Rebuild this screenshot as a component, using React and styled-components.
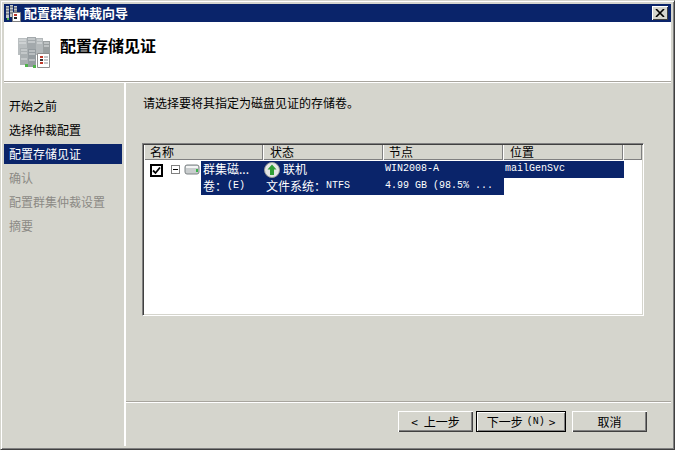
import React from "react"
import styled, { createGlobalStyle } from "styled-components"

const cjk = `"Noto Sans CJK SC", "Liberation Sans", sans-serif`
const navy = "#0a246a"
const face = "#d5d5cd"

const GlobalStyle = createGlobalStyle`
  html, body {
    margin: 0;
    padding: 0;
    background: ${face};
  }
  body {
    font-family: ${cjk};
    font-size: 12px;
    color: #000;
  }
`

const Window = styled.div`
  box-sizing: border-box;
  width: 675px;
  height: 450px;
  padding: 3px;
  background: ${face};
  border-style: solid;
  border-width: 1px;
  border-color: ${face} #404040 #404040 ${face};
  box-shadow: inset 1px 1px 0 #fff, inset -1px -1px 0 #808080;
  display: flex;
  flex-direction: column;
  overflow: hidden;
`

const TitleBar = styled.div`
  flex: 0 0 18px;
  background: ${navy};
  display: flex;
  align-items: center;
  padding: 0 3px 0 1px;
  gap: 2px;
`

const TitleText = styled.span`
  flex: 1;
  color: #fff;
  font-size: 13px;
  font-weight: 700;
  line-height: 18px;
`

const CloseButton = styled.div`
  box-sizing: border-box;
  width: 16px;
  height: 14px;
  background: ${face};
  box-shadow: inset 1px 1px 0 #fff, inset -1px -1px 0 #404040;
  display: flex;
  align-items: center;
  justify-content: center;
`

const Header = styled.div`
  flex: 0 0 59px;
  background: #fff;
  display: flex;
  align-items: flex-start;
  padding: 13px 0 0 13px;
  gap: 9px;
  box-sizing: border-box;
`

const HeaderTitle = styled.h1`
  margin: 0;
  font-size: 16px;
  line-height: 20px;
  font-weight: 700;
`

const Rule = styled.div`
  flex: 0 0 2px;
  background: linear-gradient(#a8a59e 0 1px, #fff 1px 2px);
`

const Body = styled.div`
  flex: 1;
  display: flex;
  min-height: 0;
`

const Sidebar = styled.nav`
  flex: 0 0 122px;
  box-sizing: border-box;
  padding: 13px 2px 0 0;
  border-right: 2px solid #fff;
  display: flex;
  flex-direction: column;
  gap: 4px;
`

const NavItem = styled.div`
  height: 20px;
  line-height: 20px;
  padding-left: 5px;
  white-space: nowrap;
  background: ${props => (props.$active ? navy : "transparent")};
  color: ${props => (props.$active ? "#fff" : props.$disabled ? "#8c8a85" : "#000")};
`

const Main = styled.div`
  flex: 1;
  display: flex;
  flex-direction: column;
  min-width: 0;
`

const Content = styled.div`
  flex: 1;
  padding: 12px 27px 0 16px;
  min-height: 0;
`

const Instruction = styled.p`
  margin: 0 0 32px 1px;
  line-height: 16px;
`

const ListBox = styled.div`
  box-sizing: border-box;
  width: 502px;
  height: 173px;
  background: #fff;
  border-style: solid;
  border-width: 1px;
  border-color: #808080 #fff #fff #808080;
  box-shadow: inset 1px 1px 0 #404040, inset -1px -1px 0 ${face};
  padding: 1px;
`

const ColumnHeads = styled.div`
  display: grid;
  grid-template-columns: 119px 120px 120px 120px 1fr;
  height: 15px;
  background: ${face};
  box-shadow: inset 0 -1px 0 #808080;
`

const ColumnHead = styled.div`
  box-sizing: border-box;
  padding-left: ${props => props.$indent}px;
  line-height: 14px;
  border-right: 1px solid #808080;
  box-shadow: 1px 0 0 #fff inset;
`

const Row = styled.div`
  display: flex;
  padding-top: 1px;
`

const RowLead = styled.div`
  flex: 0 0 57px;
  box-sizing: border-box;
  padding: 3px 0 0 6px;
  display: flex;
  align-items: flex-start;
`

const Check = styled.div`
  box-sizing: border-box;
  width: 13px;
  height: 13px;
  border: 2px solid #000;
  display: flex;
  align-items: center;
  justify-content: center;
`

const Expander = styled.div`
  box-sizing: border-box;
  flex: 0 0 9px;
  height: 9px;
  margin: 1px 4px 0 8px;
  border: 1px solid #808080;
  position: relative;
  &::after {
    content: "";
    position: absolute;
    left: 1px;
    right: 1px;
    top: 3px;
    height: 1px;
    background: #000;
  }
`

const Selection = styled.div`
  display: grid;
  grid-template-columns: 63px 120px 120px 120px;
  grid-auto-rows: 17px;
  color: #fff;
`

const Cell = styled.div`
  box-sizing: border-box;
  background: ${props => (props.$blank ? "#fff" : navy)};
  display: flex;
  align-items: center;
  padding-left: ${props => props.$indent}px;
  padding-bottom: 1px;
  white-space: nowrap;
  line-height: 16px;
`

const Mono = styled.span`
  font-family: "Liberation Mono", monospace;
  font-size: 10px;
  white-space: pre;
`

const StatusIcon = styled.span`
  display: flex;
  margin: 1px 3px 0 0;
`

const Footer = styled.div`
  flex: 0 0 45px;
  box-sizing: border-box;
  border-top: 1px solid #a8a59e;
  box-shadow: inset 0 1px 0 #fff;
  padding: 9px 0 0 272px;
  display: flex;
  align-items: flex-start;
`

const Button = styled.div`
  box-sizing: border-box;
  width: ${props => props.$width}px;
  height: 21px;
  margin-left: ${props => props.$gap}px;
  background: ${face};
  display: flex;
  align-items: center;
  justify-content: center;
  gap: ${props => props.$spacing || 0}px;
  line-height: 1;
  box-shadow: ${props =>
    props.$primary
      ? "inset 0 0 0 1px #000, inset 2px 2px 0 #fff, inset -2px -2px 0 #808080"
      : "inset 1px 1px 0 #fff, inset -1px -1px 0 #404040, inset -2px -2px 0 #808080"};
`

const ServerStack = () => (
  <svg width="34" height="34" viewBox="0 0 34 34">
    <path d="M26 6h7v13h-7z" fill="#9a9fa0" />
    <path d="M1 3h9v17H1z" fill="#b9bec0" />
    <path d="M10 2h9v18h-9z" fill="#a3a9ac" />
    <path d="M19 3h7v17h-7z" fill="#b3b8ba" />
    <path d="M2 5h7M2 8h7M11 4h7M11 7h7M20 5h5M20 8h5M27 8h5M27 11h5" stroke="#e2e5e6" />
    <path d="M3 13h8v17H3z" fill="#aab0b2" />
    <path d="M11 14h8v18h-8z" fill="#959ca0" />
    <path d="M4 15h6M4 18h6M12 16h6M12 19h6M4 24h6M12 25h6" stroke="#dcdfe0" />
    <path d="M8 29h3v3H8zM16 30h3v3h-3z" fill="#4fb34a" />
    <path d="M20.5 18.5h12v14h-12z" fill="#fff" stroke="#8f8f8f" />
    <path d="M23 21h3v2h-3z" fill="#c0392b" />
    <path d="M23 24h3v2h-3z" fill="#333" />
    <path d="M23 27h3v2h-3z" fill="#c0392b" />
    <path d="M27 22h4M27 25h4M27 28h4" stroke="#8a8f94" />
  </svg>
)

const SmallServerIcon = () => (
  <svg width="17" height="17" viewBox="0 0 17 17">
    <path d="M1 1h3v12H1zM5 0h3v12H5zM9 1h3v8H9z" fill="#c4c9cc" />
    <path d="M1 3h3M1 6h3M1 9h3M5 2h3M5 5h3M5 8h3M9 3h3M9 6h3" stroke="#4a5058" />
    <path d="M7.5 7.5h8v9h-8z" fill="#fff" stroke="#808080" />
    <path d="M9 9h3v2H9z" fill="#c0392b" />
    <path d="M9 12h3v2H9z" fill="#222" />
    <path d="M2 13h2v2H2z" fill="#4fb34a" />
  </svg>
)

const DiskIcon = () => (
  <svg width="16" height="11" viewBox="0 0 16 11">
    <path d="M1 3q0-2 2-2h10q2 0 2 2v5q0 2-2 2H3q-2 0-2-2z" fill="#c9cdce" stroke="#7d8385" />
    <path d="M2 3h12" stroke="#f4f5f5" strokeWidth="2" />
    <path d="M12 5h2v3h-2z" fill="#39b54a" />
  </svg>
)

const OnlineIcon = () => (
  <svg width="16" height="16" viewBox="0 0 16 16">
    <circle cx="8" cy="8" r="7.5" fill="#e4e6e4" stroke="#9a9e9a" />
    <path d="M8 2.5l4.5 5H10V13H6V7.5H3.5z" fill="#2f9e35" />
  </svg>
)

const steps = [
  { label: "开始之前" },
  { label: "选择仲裁配置" },
  { label: "配置存储见证", active: true },
  { label: "确认", disabled: true },
  { label: "配置群集仲裁设置", disabled: true },
  { label: "摘要", disabled: true }
]

const columns = [
  { label: "名称", indent: 6 },
  { label: "状态", indent: 7 },
  { label: "节点", indent: 6 },
  { label: "位置", indent: 7 },
  { label: "", indent: 0 }
]

const App = () => {
  return (
    <>
      <GlobalStyle />
      <Window>
        <TitleBar>
          <SmallServerIcon />
          <TitleText>配置群集仲裁向导</TitleText>
          <CloseButton>
            <svg width="10" height="8" viewBox="0 0 10 8">
              <path d="M1 0l8 8M9 0L1 8" stroke="#000" strokeWidth="1.6" />
            </svg>
          </CloseButton>
        </TitleBar>
        <Header>
          <ServerStack />
          <HeaderTitle>配置存储见证</HeaderTitle>
        </Header>
        <Rule />
        <Body>
          <Sidebar>
            {steps.map(step => (
              <NavItem key={step.label} $active={step.active} $disabled={step.disabled}>
                {step.label}
              </NavItem>
            ))}
          </Sidebar>
          <Main>
            <Content>
              <Instruction>请选择要将其指定为磁盘见证的存储卷。</Instruction>
              <ListBox>
                <ColumnHeads>
                  {columns.map((col, i) => (
                    <ColumnHead key={i} $indent={col.indent}>
                      {col.label}
                    </ColumnHead>
                  ))}
                </ColumnHeads>
                <Row>
                  <RowLead>
                    <Check>
                      <svg width="9" height="9" viewBox="0 0 9 9">
                        <path d="M1 4.5l2.5 2.5L8 1.5" fill="none" stroke="#000" strokeWidth="1.8" />
                      </svg>
                    </Check>
                    <Expander />
                    <DiskIcon />
                  </RowLead>
                  <Selection>
                    <Cell $indent={2}>群集磁...</Cell>
                    <Cell $indent={0}>
                      <StatusIcon>
                        <OnlineIcon />
                      </StatusIcon>
                      联机
                    </Cell>
                    <Cell $indent={1}>
                      <Mono>WIN2008-A</Mono>
                    </Cell>
                    <Cell $indent={1}>
                      <Mono>mailGenSvc</Mono>
                    </Cell>
                    <Cell $indent={2}>
                      卷：<Mono>(E)</Mono>
                    </Cell>
                    <Cell $indent={2}>
                      文件系统：<Mono>NTFS</Mono>
                    </Cell>
                    <Cell $indent={1}>
                      <Mono>4.99 GB (98.5% ...</Mono>
                    </Cell>
                    <Cell $blank />
                  </Selection>
                </Row>
              </ListBox>
            </Content>
            <Footer>
              <Button $width={75} $gap={0} $spacing={6}>
                <span>&lt;</span>
                <span>上一步</span>
              </Button>
              <Button $width={90} $gap={3} $spacing={4} $primary>
                <span>下一步</span>
                <Mono>(N)</Mono>
                <span>&gt;</span>
              </Button>
              <Button $width={75} $gap={6}>
                取消
              </Button>
            </Footer>
          </Main>
        </Body>
      </Window>
    </>
  )
}

export default App
